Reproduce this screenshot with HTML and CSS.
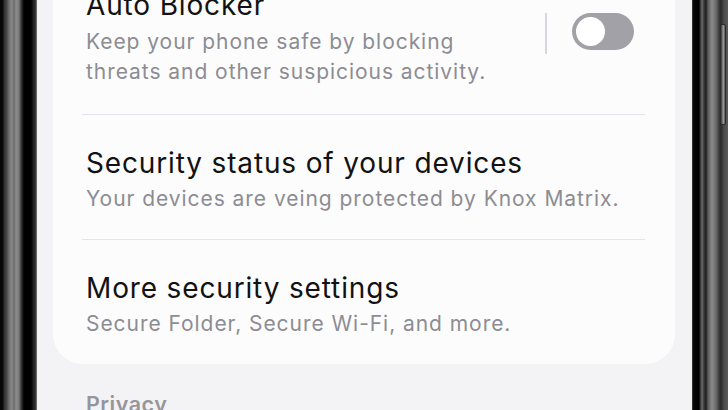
FILE: index.html
```html
<!DOCTYPE html>
<html lang="en">
<head>
<meta charset="utf-8">
<title>Security settings</title>
<link rel="stylesheet" href="styles.css">
</head>
<body>
<div class="phone">
  <div class="bezel bezel-left"></div>
  <div class="screen">
    <div class="card">
      <div class="row row-first">
        <div class="text">
          <div class="title">Auto Blocker</div>
          <div class="sub">Keep your phone safe by blocking<br>threats and other suspicious activity.</div>
        </div>
        <div class="switch-area">
          <div class="vsep"></div>
          <div class="toggle"><div class="knob"></div></div>
        </div>
      </div>
      <div class="divider"></div>
      <div class="row">
        <div class="text">
          <div class="title">Security status of your devices</div>
          <div class="sub">Your devices are veing protected by Knox Matrix.</div>
        </div>
      </div>
      <div class="divider"></div>
      <div class="row row-last">
        <div class="text">
          <div class="title">More security settings</div>
          <div class="sub">Secure Folder, Secure Wi-Fi, and more.</div>
        </div>
      </div>
    </div>
    <div class="section-label">Privacy</div>
  </div>
  <div class="bezel bezel-right"><div class="side-button"></div></div>
</div>
</body>
</html>
```
FILE: styles.css
```css
html, body {
  margin: 0;
  padding: 0;
  width: 728px;
  height: 410px;
  overflow: hidden;
  background: #000;
  font-family: "Inter", "Open Sans", "Liberation Sans", sans-serif;
}
.phone {
  display: flex;
  width: 728px;
  height: 410px;
}
.bezel {
  flex: none;
  height: 100%;
}
.bezel-left {
  width: 37px;
  background: linear-gradient(to right,
    #050505 0px, #0a0a0a 3px,
    #2e2e2e 4px, #4a4a4a 7px,
    #6e6e6e 9px, #8a8a8a 12px, #6a6a6a 14px, #8c8c8c 16px, #7a7a7a 19px,
    #3c3c3c 21px, #121212 23px,
    #000 24px, #000 31px,
    #1c1c1c 33px, #3a3a3a 36px, #9a9a9c 37px);
}
.bezel-right {
  width: 36px;
  position: relative;
  background: linear-gradient(to right,
    #5a5a5c 0px, #0a0a0a 1px, #000 7px,
    #2a2a2a 8px, #6a6a6a 10px, #3a3a3a 12px,
    #1e1e1e 14px, #5c5c5c 16px, #8a8a8a 20px, #6c6c6c 24px,
    #3c3c3c 27px, #2a2a2a 29px, #4a4a4a 32px, #5a5a5a 36px);
}
.side-button {
  position: absolute;
  left: 28px;
  top: 24px;
  width: 6px;
  height: 101px;
  border-radius: 2px;
  background: linear-gradient(to right, #3a3a3a, #7a7a7a 40%, #9a9a9a 70%, #4a4a4a);
  border: 1px solid #2a2a2a;
  box-sizing: border-box;
}
.screen {
  flex: 1;
  background: #f3f3f5;
  padding: 0 17px 0 16px;
  overflow: hidden;
  display: flex;
  flex-direction: column;
}
.card {
  margin-top: -43px;
  background: #fcfcfd;
  border-radius: 30px;
  display: flex;
  flex-direction: column;
}
.row {
  display: flex;
  align-items: flex-start;
  padding: 30px 33px 25px 33px;
}
.row-first {
  padding-bottom: 27px;
}
.row-last {
  padding-bottom: 25px;
}
.text {
  flex: 1;
  white-space: nowrap;
}
.title {
  font-size: 28px;
  line-height: 36px;
  color: #121212;
  letter-spacing: 0.85px;
}
.sub {
  margin-top: 3px;
  font-size: 21px;
  line-height: 30px;
  color: #8c8c92;
  letter-spacing: 0.95px;
}
.row-first .sub {
  margin-top: 4px;
}
.switch-area {
  display: flex;
  align-items: flex-start;
  margin-top: 26px;
  margin-right: 8px;
}
.vsep {
  width: 2px;
  height: 41px;
  background: #d6d6dc;
  margin-right: 25px;
}
.toggle {
  width: 62px;
  height: 37px;
  border-radius: 19px;
  background: #a1a1a7;
  position: relative;
}
.knob {
  position: absolute;
  left: 4px;
  top: 4px;
  width: 29px;
  height: 29px;
  border-radius: 50%;
  background: #fff;
}
.divider {
  height: 1px;
  background: #e3e3ea;
  margin: 0 30px 0 29px;
}
.section-label {
  margin-top: 25px;
  padding-left: 33px;
  font-size: 21.5px;
  font-weight: 600;
  color: #95959b;
  line-height: 30px;
  letter-spacing: 0.5px;
}
```
